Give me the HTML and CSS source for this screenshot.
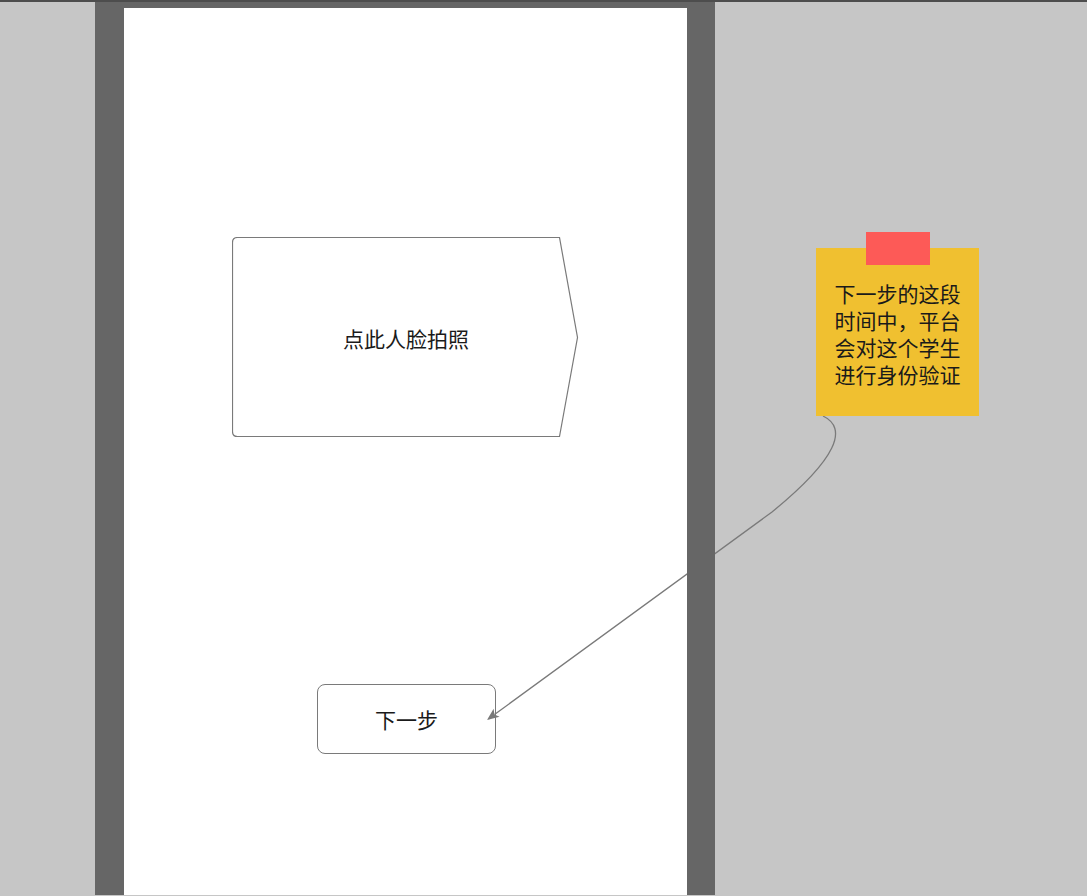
FILE: index.html
```html
<!DOCTYPE html>
<html lang="zh-CN">
    <head>
        <meta charset="UTF-8">
        <meta name="viewport" content="width=device-width, initial-scale=1.0">
        <title>人脸拍照 - 原型</title>
        <link rel="stylesheet" href="styles.css">
    </head>
    <body>
        <div class="canvas">
            <div class="topbar"></div>

            <!-- phone screen -->
            <div class="screen"></div>

            <div class="face-shape">
                <svg class="face-outline" width="348" height="202" viewBox="0 0 348 202">
                    <path d="M5.5 0.5 H327.5 L345.5 100.5 L327.5 199.5 H5.5 Q0.5 199.5 0.5 194.5 V5.5 Q0.5 0.5 5.5 0.5 Z"
                          fill="#fff" stroke="#7a7a7a" stroke-width="1.2"/>
                </svg>
                <span class="face-label">点此人脸拍照</span>
            </div>

            <div class="next-btn">下一步</div>

            <!-- connector from the note to the button -->
            <svg class="link" width="1087" height="896" viewBox="0 0 1087 896">
                <path d="M823 416 C848 428, 838 458, 772 512 L494.5 714.5"
                      fill="none" stroke="#7a7a7a" stroke-width="1.3"/>
                <polygon points="487,720 493.6,708.8 494.4,714.4 499.6,716.8" fill="#7a7a7a"/>
            </svg>

            <!-- phone bezel sits above the connector -->
            <div class="bezel"></div>

            <div class="note">
                <div class="note-tab"></div>
                <p class="note-text">下一步的这段时间中，平台会对这个学生进行身份验证</p>
            </div>
        </div>
    </body>
</html>
```

FILE: styles.css
```css
body {
    margin: 0;
    background-color: #c6c6c6;
    font-family: "Noto Sans CJK SC", "Liberation Sans", sans-serif;
    color: #1a1a1a;
    overflow: hidden;
}
.canvas {
    position: relative;
    width: 1087px;
    height: 896px;
}
.topbar {
    height: 2px;
    background-color: #4d4d4d;
}
.screen {
    position: absolute;
    left: 124px;
    top: 8px;
    width: 563px;
    height: 887px;
    background-color: #fff;
}
.bezel {
    position: absolute;
    left: 95px;
    top: 2px;
    width: 563px;
    height: 887px;
    border-style: solid;
    border-color: #666;
    border-width: 6px 28px 0 29px;
    pointer-events: none;
}
.face-shape {
    position: absolute;
    left: 232px;
    top: 237px;
    width: 348px;
    height: 202px;
    display: flex;
    align-items: center;
    justify-content: center;
}
.face-outline {
    position: absolute;
    left: 0;
    top: 0;
}
.face-label {
    position: relative;
    font-size: 21px;
}
.next-btn {
    position: absolute;
    left: 317px;
    top: 684px;
    width: 177px;
    height: 68px;
    border: 1px solid #7a7a7a;
    border-radius: 8px;
    background-color: #fff;
    display: flex;
    align-items: center;
    justify-content: center;
    font-size: 21px;
}
.link {
    position: absolute;
    left: 0;
    top: 0;
    pointer-events: none;
}
.note {
    position: absolute;
    left: 816px;
    top: 248px;
    width: 163px;
    height: 168px;
    background-color: #f0c030;
    display: flex;
    align-items: center;
    justify-content: center;
}
.note-tab {
    position: absolute;
    left: 50px;
    top: -16px;
    width: 64px;
    height: 33px;
    background-color: #fd5a57;
}
.note-text {
    margin: 4px 0 0 0;
    width: 130px;
    font-size: 21px;
    line-height: 27px;
    text-align: center;
}
```
